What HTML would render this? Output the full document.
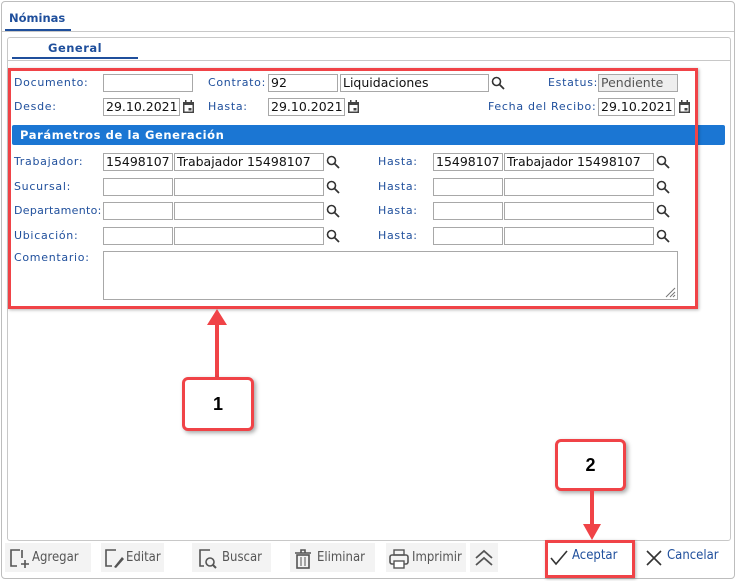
<!DOCTYPE html><html><head><meta charset="utf-8"><style>
*{box-sizing:border-box}body{margin:0;width:736px;height:581px;background:#fff;font-family:"DejaVu Sans","Liberation Sans",sans-serif;position:relative;overflow:hidden}
.a{position:absolute}
.l{position:absolute;font-size:11px;color:#1f4f9c;letter-spacing:.7px}
.i{position:absolute;height:18px;border:1px solid #a8a8a8;background:#fff;font-family:"DejaVu Sans",sans-serif;font-size:12.5px;color:#111;padding:0 2px;line-height:16px;white-space:nowrap;overflow:hidden}
.b{position:absolute;top:543px;height:29px;background:#f3f3f3;font-size:13px;color:#555;line-height:29px;font-family:"DejaVu Sans Condensed","DejaVu Sans",sans-serif}
.box{position:absolute;background:#fff;border:3px solid #f04347;border-radius:6px;box-shadow:2px 2px 4px rgba(0,0,0,.35);font:bold 18px "Liberation Sans",sans-serif;text-align:center}
</style></head><body>
<div class="a" style="left:1px;top:1px;width:734px;height:578px;border:1px solid #bdbdbd;border-radius:4px"></div>
<div class="a" style="left:9px;top:11px;font-size:11.5px;font-weight:bold;color:#1f4f9c">Nóminas</div>
<div class="a" style="left:5px;top:29px;width:66px;height:2px;background:#1f4f9c"></div>
<div class="a" style="left:2px;top:31px;width:732px;height:1px;background:#c8c8c8"></div>
<div class="a" style="left:7px;top:37px;width:724px;height:504px;border:1px solid #c8c8c8;border-radius:3px"></div>
<div class="a" style="left:48px;top:41px;font-size:11.5px;font-weight:bold;color:#1f4f9c;letter-spacing:.5px">General</div>
<div class="a" style="left:12px;top:57px;width:126px;height:2px;background:#1f4f9c"></div>
<div class="a" style="left:8px;top:60px;width:722px;height:1px;background:#c8c8c8"></div>

<div class="l" style="left:14px;top:76px">Documento:</div><div class="i" style="left:103px;top:74px;width:90px"></div>
<div class="l" style="left:208px;top:76px">Contrato:</div><div class="i" style="left:268px;top:74px;width:70px">92</div><div class="i" style="left:340px;top:74px;width:149px">Liquidaciones</div>
<svg class="a" style="left:491px;top:76px" width="14" height="14"><circle cx="5.5" cy="5.5" r="4" fill="none" stroke="#333" stroke-width="1.6"/><path d="M8.5 8.5L13 13" stroke="#333" stroke-width="1.8"/></svg>
<div class="l" style="left:548px;top:76px">Estatus:</div><div class="i" style="left:598px;top:74px;width:80px;background:#eee;color:#555">Pendiente</div>

<div class="l" style="left:14px;top:100px">Desde:</div><div class="i" style="left:103px;top:98px;width:77px">29.10.2021</div>
<div class="l" style="left:208px;top:100px">Hasta:</div><div class="i" style="left:268px;top:98px;width:77px">29.10.2021</div>
<div class="l" style="left:488px;top:100px">Fecha del Recibo:</div><div class="i" style="left:598px;top:98px;width:77px">29.10.2021</div>
<svg width="0" height="0"><defs><g id="cal"><rect x="1" y="2" width="11" height="11" fill="#444"/><rect x="2.5" y="5" width="8" height="6.5" fill="#fff"/><rect x="6.5" y="8" width="3" height="2.5" fill="#444"/><rect x="3" y="0" width="1.5" height="3" fill="#444"/><rect x="8.5" y="0" width="1.5" height="3" fill="#444"/></g><g id="mag"><circle cx="5.5" cy="5.5" r="4" fill="none" stroke="#333" stroke-width="1.6"/><path d="M8.5 8.5L13 13" stroke="#333" stroke-width="1.8"/></g></defs></svg>
<svg class="a" style="left:182px;top:100px" width="14" height="14"><use href="#cal"/></svg>
<svg class="a" style="left:347px;top:100px" width="14" height="14"><use href="#cal"/></svg>
<svg class="a" style="left:678px;top:100px" width="14" height="14"><use href="#cal"/></svg>

<div class="a" style="left:12px;top:125px;width:713px;height:20px;background:#1b76d3;border-radius:2px;color:#fff;font-size:11.5px;font-weight:bold;line-height:20px;padding-left:8px;letter-spacing:.6px">Parámetros de la Generación</div>

<div class="l" style="left:14px;top:155px">Trabajador:</div><div class="i" style="left:103px;top:153px;width:70px">15498107</div><div class="i" style="left:174px;top:153px;width:150px">Trabajador 15498107</div><svg class="a" style="left:326px;top:155px" width="14" height="14"><use href="#mag"/></svg>
<div class="l" style="left:378px;top:155px">Hasta:</div><div class="i" style="left:433px;top:153px;width:70px">15498107</div><div class="i" style="left:504px;top:153px;width:150px">Trabajador 15498107</div><svg class="a" style="left:656px;top:155px" width="14" height="14"><use href="#mag"/></svg>

<div class="l" style="left:14px;top:180px">Sucursal:</div><div class="i" style="left:103px;top:178px;width:70px"></div><div class="i" style="left:174px;top:178px;width:150px"></div><svg class="a" style="left:326px;top:180px" width="14" height="14"><use href="#mag"/></svg>
<div class="l" style="left:378px;top:180px">Hasta:</div><div class="i" style="left:433px;top:178px;width:70px"></div><div class="i" style="left:504px;top:178px;width:150px"></div><svg class="a" style="left:656px;top:180px" width="14" height="14"><use href="#mag"/></svg>

<div class="l" style="left:14px;top:204px;letter-spacing:.3px">Departamento:</div><div class="i" style="left:103px;top:202px;width:70px"></div><div class="i" style="left:174px;top:202px;width:150px"></div><svg class="a" style="left:326px;top:204px" width="14" height="14"><use href="#mag"/></svg>
<div class="l" style="left:378px;top:204px">Hasta:</div><div class="i" style="left:433px;top:202px;width:70px"></div><div class="i" style="left:504px;top:202px;width:150px"></div><svg class="a" style="left:656px;top:204px" width="14" height="14"><use href="#mag"/></svg>

<div class="l" style="left:14px;top:229px">Ubicación:</div><div class="i" style="left:103px;top:227px;width:70px"></div><div class="i" style="left:174px;top:227px;width:150px"></div><svg class="a" style="left:326px;top:229px" width="14" height="14"><use href="#mag"/></svg>
<div class="l" style="left:378px;top:229px">Hasta:</div><div class="i" style="left:433px;top:227px;width:70px"></div><div class="i" style="left:504px;top:227px;width:150px"></div><svg class="a" style="left:656px;top:229px" width="14" height="14"><use href="#mag"/></svg>

<div class="l" style="left:14px;top:251px">Comentario:</div><div class="i" style="left:103px;top:251px;width:575px;height:49px"></div>
<svg class="a" style="left:664px;top:286px" width="12" height="12"><path d="M11 2L2 11M11 6L6 11M11 9L9 11" stroke="#777"/></svg>

<div class="a" style="left:8px;top:68px;width:690px;height:241px;border:3px solid #f04347;box-shadow:1px 1px 3px rgba(0,0,0,.3)"></div>
<div class="a" style="left:215px;top:322px;width:4px;height:58px;background:#f04347"></div>
<svg class="a" style="left:207px;top:309px" width="20" height="16"><path d="M10 0L20 16H0Z" fill="#f04347"/></svg>
<div class="box" style="left:182px;top:377px;width:72px;height:54px;line-height:48px">1</div>

<div class="box" style="left:555px;top:439px;width:71px;height:52px;line-height:46px">2</div>
<div class="a" style="left:590px;top:490px;width:4px;height:38px;background:#f04347"></div>
<svg class="a" style="left:583px;top:524px" width="18" height="16"><path d="M0 0H18L9 16Z" fill="#f04347"/></svg>

<div class="b" style="left:5px;width:86px"><svg class="a" style="left:3px;top:5px" width="22" height="22"><path d="M12 2H3V18H9" fill="none" stroke="#555" stroke-width="1.6"/><path d="M14 2V10M13 16H21M17 12V20" stroke="#555" stroke-width="1.6"/></svg><span style="margin-left:27px">Agregar</span></div>
<div class="b" style="left:101px;width:63px"><svg class="a" style="left:2px;top:5px" width="22" height="22"><path d="M13 2H3V18H9" fill="none" stroke="#555" stroke-width="1.6"/><path d="M11 19L19 9L21 11L13 20Z" fill="#555"/></svg><span style="margin-left:25px">Editar</span></div>
<div class="b" style="left:192px;width:79px"><svg class="a" style="left:5px;top:5px" width="22" height="22"><path d="M13 2H3V18H7" fill="none" stroke="#555" stroke-width="1.6"/><circle cx="13" cy="14" r="4" fill="none" stroke="#555" stroke-width="1.6"/><path d="M16 17L19 20" stroke="#555" stroke-width="2"/></svg><span style="margin-left:30px">Buscar</span></div>
<div class="b" style="left:290px;width:85px"><svg class="a" style="left:2px;top:5px" width="22" height="22"><path d="M3 5H19M9 5V2H13V5" fill="none" stroke="#555" stroke-width="1.6"/><rect x="5" y="7" width="12" height="13" fill="none" stroke="#555" stroke-width="1.6"/><path d="M9 9V18M13 9V18" stroke="#555"/></svg><span style="margin-left:27px">Eliminar</span></div>
<div class="b" style="left:386px;width:80px"><svg class="a" style="left:2px;top:5px" width="22" height="22"><rect x="6" y="2" width="10" height="5" fill="none" stroke="#555" stroke-width="1.4"/><rect x="2" y="7" width="18" height="9" rx="2" fill="none" stroke="#555" stroke-width="1.6"/><rect x="6" y="13" width="10" height="7" fill="#fff" stroke="#555" stroke-width="1.4"/></svg><span style="margin-left:26px">Imprimir</span></div>
<div class="b" style="left:470px;width:28px"><svg class="a" style="left:4px;top:6px" width="20" height="18"><path d="M2 9L10 2L18 9M2 16L10 9L18 16" fill="none" stroke="#555" stroke-width="1.8"/></svg></div>
<div class="a" style="left:545px;top:540px;width:90px;height:38px;border:3px solid #f04347;box-shadow:1px 1px 3px rgba(0,0,0,.3)"></div>
<svg class="a" style="left:549px;top:549px" width="20" height="18"><path d="M2 9L7 15L18 2" fill="none" stroke="#333" stroke-width="1.6"/></svg>
<div class="a" style="left:572px;top:548px;font-size:13px;color:#1f4f9c;font-family:'DejaVu Sans Condensed','DejaVu Sans',sans-serif">Aceptar</div>
<svg class="a" style="left:645px;top:549px" width="18" height="18"><path d="M2 2L16 16M16 2L2 16" stroke="#333" stroke-width="1.6"/></svg>
<div class="a" style="left:667px;top:548px;font-size:13px;color:#1f4f9c;font-family:'DejaVu Sans Condensed','DejaVu Sans',sans-serif">Cancelar</div>
</body></html>
